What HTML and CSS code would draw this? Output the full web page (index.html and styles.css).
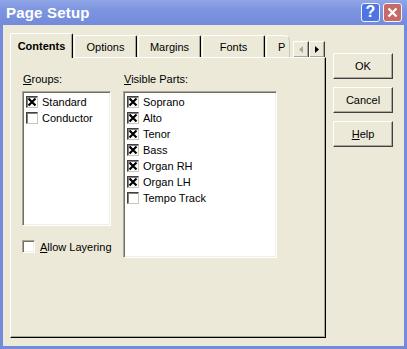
FILE: index.html
```html
<!DOCTYPE html>
<html lang="en">
<head>
    <meta charset="UTF-8">
    <title>Page Setup</title>
    <link rel="stylesheet" href="styles.css">
</head>
<body>
    <div class="window">
        <!-- Title bar -->
        <div class="titlebar">
            <span class="title">Page Setup</span>
            <div class="caption-buttons">
                <span class="cap-btn cap-help">?</span>
                <span class="cap-btn cap-close">
                    <svg width="11" height="11" viewBox="0 0 11 11"><path d="M1.5 1.5 L9.5 9.5 M9.5 1.5 L1.5 9.5" stroke="#fff" stroke-width="2.2" fill="none"/></svg>
                </span>
            </div>
        </div>

        <div class="client">
            <!-- Property sheet -->
            <div class="sheet">
                <div class="tabstrip">
                    <div class="tabs">
                        <div class="tab active">Contents</div>
                        <div class="tab">Options</div>
                        <div class="tab">Margins</div>
                        <div class="tab">Fonts</div>
                        <div class="tab tab-cut">P</div>
                    </div>
                    <div class="spin">
                        <span class="spin-btn disabled"><svg width="4" height="7" viewBox="0 0 4 7"><path d="M4 0 L0 3.5 L4 7 Z" fill="#aca899"/></svg></span>
                        <span class="spin-btn"><svg width="4" height="7" viewBox="0 0 4 7"><path d="M0 0 L4 3.5 L0 7 Z" fill="#000"/></svg></span>
                    </div>
                </div>

                <div class="panel">
                    <div class="col col-groups">
                        <div class="label"><u>G</u>roups:</div>
                        <div class="listbox groups-list">
                            <div class="item"><span class="cb checked"></span><span>Standard</span></div>
                            <div class="item"><span class="cb"></span><span>Conductor</span></div>
                        </div>
                        <div class="check-row"><span class="cb flat"></span><span><u>A</u>llow Layering</span></div>
                    </div>
                    <div class="col col-parts">
                        <div class="label"><u>V</u>isible Parts:</div>
                        <div class="listbox parts-list">
                            <div class="item"><span class="cb checked"></span><span>Soprano</span></div>
                            <div class="item"><span class="cb checked"></span><span>Alto</span></div>
                            <div class="item"><span class="cb checked"></span><span>Tenor</span></div>
                            <div class="item"><span class="cb checked"></span><span>Bass</span></div>
                            <div class="item"><span class="cb checked"></span><span>Organ RH</span></div>
                            <div class="item"><span class="cb checked"></span><span>Organ LH</span></div>
                            <div class="item"><span class="cb"></span><span>Tempo Track</span></div>
                        </div>
                    </div>
                </div>
            </div>

            <!-- Dialog buttons -->
            <div class="buttons">
                <div class="btn">OK</div>
                <div class="btn">Cancel</div>
                <div class="btn"><span><u>H</u>elp</span></div>
            </div>
        </div>
    </div>
</body>
</html>
```

FILE: styles.css
```css
/* Global */
body {
    margin: 0;
    padding: 0;
    font-family: "Liberation Sans", Arial, sans-serif;
    font-size: 11px;
    color: #000;
    background-color: #ece9d8;
}

.window {
    width: 407px;
    height: 349px;
    display: flex;
    flex-direction: column;
    background-color: #ece9d8;
}

/* Title bar */
.titlebar {
    height: 25px;
    display: flex;
    align-items: center;
    justify-content: space-between;
    padding: 0 5px 0 6px;
    background: linear-gradient(#91a6e8, #7d94df 40%, #748bdc);
}

.title {
    color: #fff;
    font-size: 15px;
    font-weight: bold;
    letter-spacing: 0.2px;
}

.caption-buttons {
    display: flex;
    gap: 3px;
    margin-top: -1px;
}

.cap-btn {
    width: 19px;
    height: 19px;
    box-sizing: border-box;
    border: 1px solid #f2f4fc;
    border-radius: 3px;
    display: flex;
    align-items: center;
    justify-content: center;
    color: #fff;
    font-weight: bold;
    font-size: 16px;
}

.cap-help {
    background-color: #4d74e2;
}

.cap-close {
    background-color: #c56a66;
}

/* Client area */
.client {
    flex: 1;
    display: flex;
    padding: 8px 0 0 7px;
    border: 3px solid #748bdc;
    border-top: none;
}

.sheet {
    width: 316px;
    display: flex;
    flex-direction: column;
}

/* Tabs */
.tabstrip {
    height: 24px;
    display: flex;
    align-items: flex-end;
}

.tabs {
    width: 280px;
    height: 25px;
    display: flex;
    align-items: flex-end;
    gap: 1px;
    overflow: hidden;
    position: relative;
    z-index: 1;
    margin-bottom: -1px;
}

.tab {
    flex: 0 0 auto;
    width: 63px;
    height: 22px;
    box-sizing: border-box;
    display: flex;
    align-items: center;
    justify-content: center;
    border-top: 1px solid #fff;
    border-left: 1px solid #fff;
    border-right: 1px solid #000;
    border-radius: 2px 2px 0 0;
    box-shadow: inset -1px 0 #aca899;
    margin-bottom: 1px;
    background-color: #ece9d8;
}

.tab.active {
    height: 25px;
    margin-bottom: 0;
    font-weight: bold;
}

.tab.tab-cut {
    width: 24px;
    justify-content: flex-start;
    padding-left: 11px;
    border-right: 1px solid #c8c6bb;
    border-radius: 2px 6px 0 0;
    box-shadow: none;
}

.spin {
    display: flex;
    margin-left: 3px;
    margin-bottom: -1px;
}

.spin-btn {
    width: 16px;
    height: 17px;
    box-sizing: border-box;
    display: flex;
    align-items: center;
    justify-content: center;
    border: 1px solid;
    border-color: #fff #404040 #404040 #fff;
    box-shadow: inset -1px -1px #aca899;
    background-color: #ece9d8;
}

/* Panel */
.panel {
    height: 281px;
    box-sizing: border-box;
    display: flex;
    gap: 12px;
    padding: 15px 0 0 11px;
    border-top: 1px solid #fff;
    border-left: 1px solid #fff;
    border-right: 1px solid #000;
    border-bottom: 1px solid #000;
    box-shadow: inset -1px -1px #aca899;
}

.col {
    display: flex;
    flex-direction: column;
}

.col-groups {
    width: 89px;
}

.col-parts {
    width: 154px;
}

.label {
    height: 13px;
    line-height: 13px;
    padding-left: 1px;
    margin-bottom: 5px;
}

.listbox {
    box-sizing: border-box;
    background-color: #fff;
    border: 1px solid;
    border-color: #aca899 #fff #fff #aca899;
    box-shadow: inset 1px 1px #716f64, inset -1px -1px #f1efe2;
    padding: 2px 0 0 2px;
}

.groups-list {
    width: 89px;
    height: 135px;
}

.parts-list {
    width: 154px;
    height: 167px;
}

.item {
    height: 16px;
    display: flex;
    align-items: center;
    gap: 4px;
    white-space: nowrap;
}

/* Check boxes */
.cb {
    flex: 0 0 auto;
    width: 12px;
    height: 12px;
    box-sizing: border-box;
    border: 1px solid;
    border-color: #404040 #c8c6bb #c8c6bb #404040;
    box-shadow: inset 1px 1px #808080;
    background-color: #fff;
    margin-left: 1px;
}

.cb.checked {
    background-image: url("data:image/svg+xml,%3Csvg xmlns='http://www.w3.org/2000/svg' width='10' height='10' viewBox='0 0 10 10'%3E%3Cpath d='M1.5 1.5 L8.5 8.5 M8.5 1.5 L1.5 8.5' stroke='%23000' stroke-width='2.2' fill='none'/%3E%3C/svg%3E");
    background-repeat: no-repeat;
    background-position: center;
}

.cb.flat {
    width: 13px;
    height: 13px;
    margin-left: 0;
    border-color: #aca899 #fff #fff #aca899;
    box-shadow: inset 1px 1px #716f64, inset -1px -1px #f1efe2;
}

.check-row {
    display: flex;
    align-items: center;
    gap: 5px;
    margin-top: 14px;
    white-space: nowrap;
}

/* Dialog buttons */
.buttons {
    display: flex;
    flex-direction: column;
    gap: 8px;
    margin-left: 7px;
    padding-top: 20px;
}

.btn {
    width: 60px;
    height: 26px;
    box-sizing: border-box;
    display: flex;
    align-items: center;
    justify-content: center;
    border: 1px solid;
    border-color: #fff #404040 #404040 #fff;
    box-shadow: inset -1px -1px #aca899;
    background-color: #ece9d8;
}
```
